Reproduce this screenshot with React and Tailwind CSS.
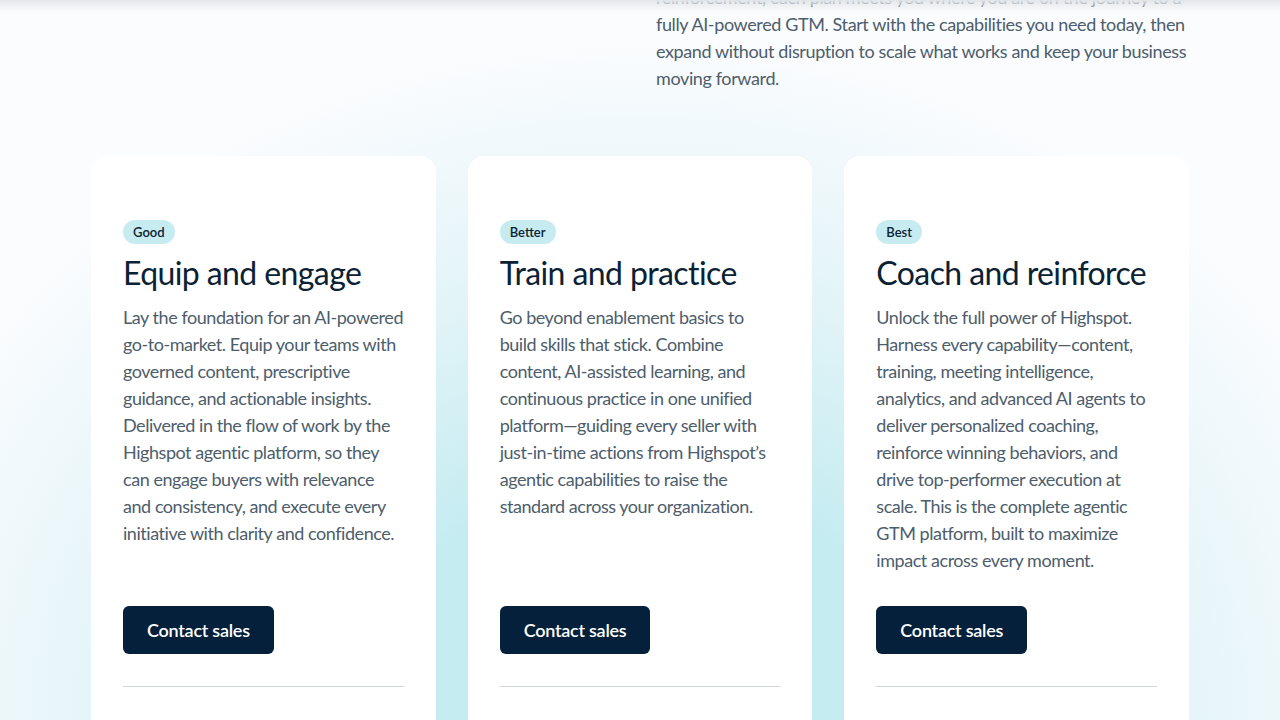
const plans = [
  {
    tier: 'Good',
    title: 'Equip and engage',
    lines: [
      'Lay the foundation for an AI-powered',
      'go-to-market. Equip your teams with',
      'governed content, prescriptive',
      'guidance, and actionable insights.',
      'Delivered in the flow of work by the',
      'Highspot agentic platform, so they',
      'can engage buyers with relevance',
      'and consistency, and execute every',
      'initiative with clarity and confidence.',
    ],
  },
  {
    tier: 'Better',
    title: 'Train and practice',
    lines: [
      'Go beyond enablement basics to',
      'build skills that stick. Combine',
      'content, AI-assisted learning, and',
      'continuous practice in one unified',
      'platform—guiding every seller with',
      'just-in-time actions from Highspot’s',
      'agentic capabilities to raise the',
      'standard across your organization.',
    ],
  },
  {
    tier: 'Best',
    title: 'Coach and reinforce',
    lines: [
      'Unlock the full power of Highspot.',
      'Harness every capability—content,',
      'training, meeting intelligence,',
      'analytics, and advanced AI agents to',
      'deliver personalized coaching,',
      'reinforce winning behaviors, and',
      'drive top-performer execution at',
      'scale. This is the complete agentic',
      'GTM platform, built to maximize',
      'impact across every moment.',
    ],
  },
];

const intro = [
  'reinforcement, each plan meets you where you are on the journey to a',
  'fully AI-powered GTM. Start with the capabilities you need today, then',
  'expand without disruption to scale what works and keep your business',
  'moving forward.',
];

function PlanCard({ plan }) {
  return (
    <div className="flex flex-col rounded-2xl bg-white px-8 pt-16 pb-10">
      <span className="self-start rounded-full bg-[#c6ecf2] px-2.5 text-[13px] font-semibold leading-6 text-[#0a2233]">
        {plan.tier}
      </span>
      <h3 className="mt-[9px] text-[32px] leading-10 font-normal tracking-[-0.6px] text-[#0b2235]">{plan.title}</h3>
      <p className="mt-[11px] flex-1 text-[18px] leading-[27px] tracking-[-0.45px] text-[#4d5d6c]">
        {plan.lines.map((l, i) => (
          <span key={i} className="block whitespace-nowrap">{l}</span>
        ))}
      </p>
      <div className="mt-8">
        <button className="h-12 rounded-md bg-[#04203a] px-6 text-[18px] font-semibold tracking-[-0.25px] text-white">
          Contact sales
        </button>
      </div>
      <div className="mt-8 border-t border-[#cfd5db]" />
      <div className="h-24" />
    </div>
  );
}

export default function App() {
  return (
    <div
      className="relative h-[720px] overflow-hidden bg-[radial-gradient(ellipse_62%_95%_at_50%_100%,#c2ebf1_0%,#c5ecf1_35%,#e2f4f8_65%,#fbfcfe_100%)]"
      style={{ fontFamily: 'Lato, "Noto Sans", sans-serif' }}
    >
      {/* header shadow bleeding in from above */}
      <div className="absolute inset-x-0 top-0 h-3 bg-gradient-to-b from-[#e3e6ea] to-transparent" />

      <div className="mx-auto w-[1098px]">
        <div className="grid grid-cols-2 gap-x-8">
          <div />
          <p className="-mt-[16px] text-[18px] leading-[27px] tracking-[-0.38px] text-[#4d5d6c]">
            {intro.map((l, i) => (
              <span key={i} className="block whitespace-nowrap">{l}</span>
            ))}
          </p>
        </div>

        <div className="mt-16 grid grid-cols-3 gap-8">
          {plans.map((p) => (
            <PlanCard key={p.tier} plan={p} />
          ))}
        </div>
      </div>
    </div>
  );
}
